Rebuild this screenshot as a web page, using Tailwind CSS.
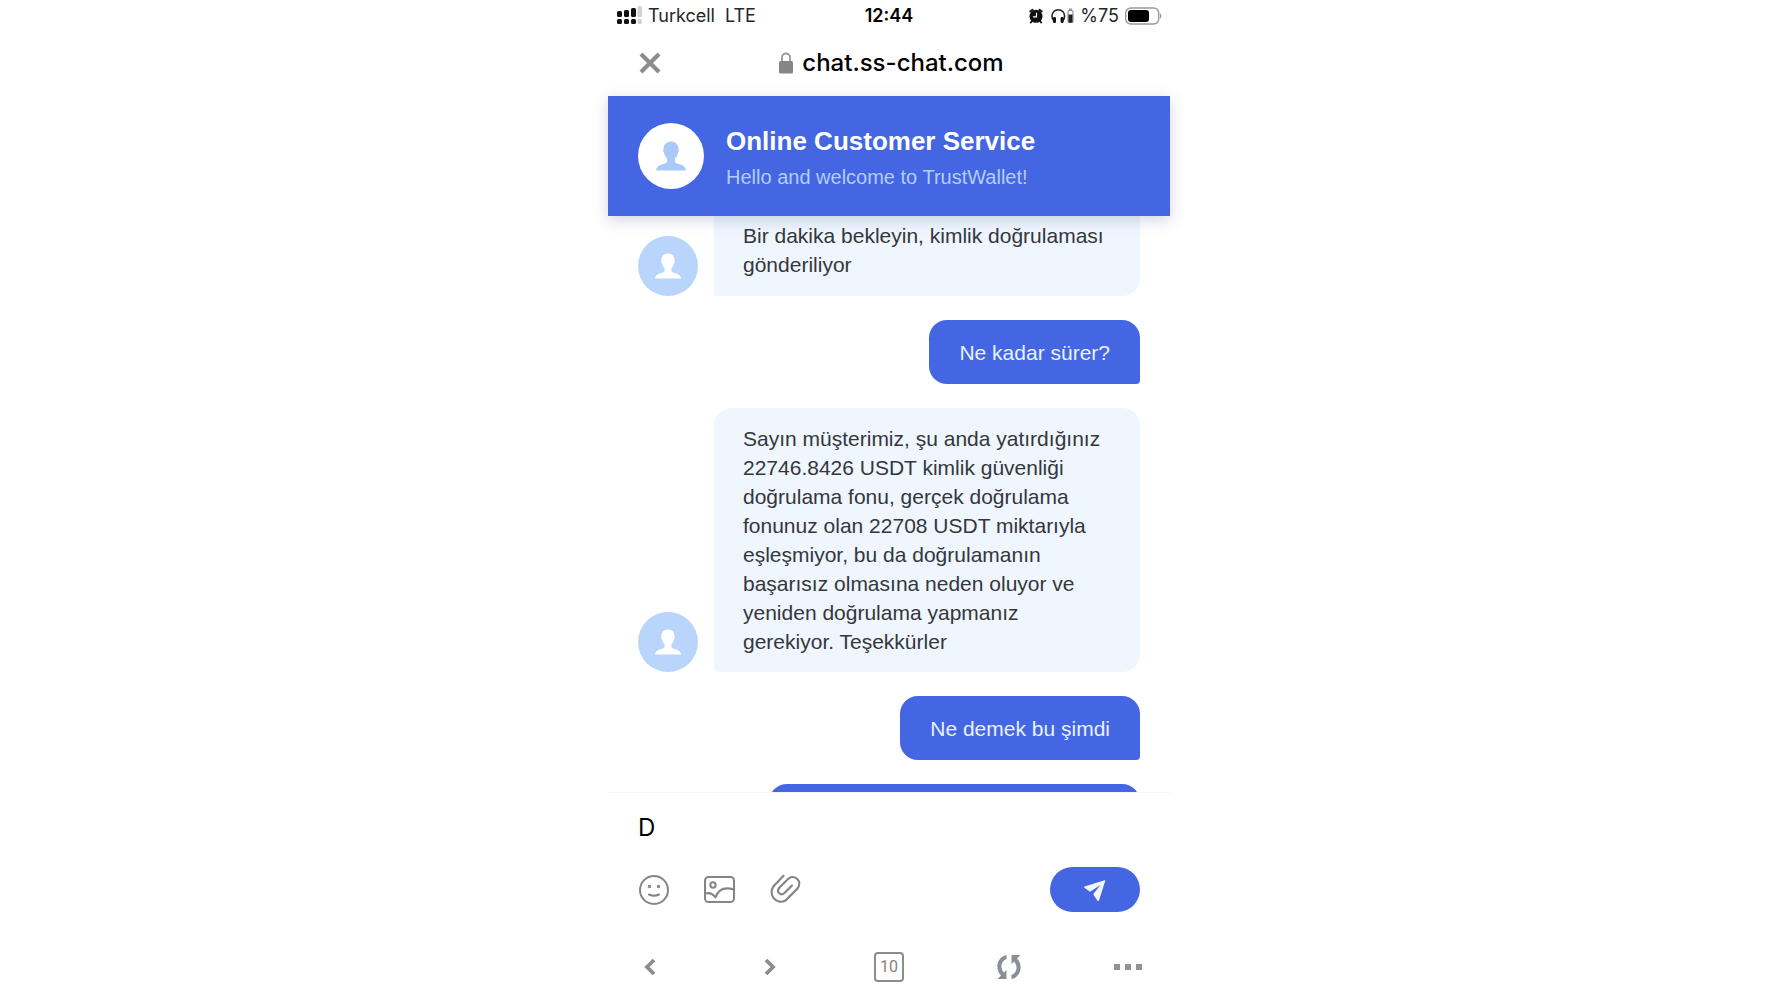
<!DOCTYPE html>
<html lang="tr">
<head>
  <meta charset="UTF-8" />
  <meta name="viewport" content="width=device-width, initial-scale=1.0"/>
  <title>Online Customer Service</title>
  <script src="https://cdn.jsdelivr.net/npm/@tailwindcss/browser@4"></script>
</head>
<body class="bg-white font-['Liberation_Sans',Arial,sans-serif]">

  <!-- shared person shape -->
  <svg class="hidden">
    <symbol id="person" viewBox="0 0 30 30">
      <path d="M15 0.500c4.700 0 7.600 3.200 7.400 7.500 0.700 0.300 0.700 2.500-0.400 3.700-0.500 2.500-1.600 4.400-3 5.600v3.500c0.300 1.200 1.500 1.700 3.500 2.300 4.500 1.200 7 2.700 7.500 6.400H0c0.500-3.700 3-5.200 7.500-6.400 2-0.600 3.200-1.100 3.500-2.300v-3.500c-1.400-1.200-2.500-3.100-3-5.600-1.100-1.200-1.100-3.400-0.400-3.700C7.400 5 8.500 2.500 11 1.700c1-0.800 2.400-1.200 4-1.200z" fill="currentColor"/>
    </symbol>
  </svg>

  <div class="mx-auto flex h-screen w-full max-w-[562px] flex-col">

    <!-- Status bar -->
    <div class="grid h-8 shrink-0 grid-cols-3 items-center px-2 font-[Inter,sans-serif] text-lg leading-8 text-neutral-800">
      <div class="flex items-center gap-1.5">
        <svg class="h-5 w-[26px]" viewBox="0 0 26 20" aria-hidden="true">
          <g fill="#111">
            <rect x="1" y="5" width="5" height="6" rx="1.500"/><rect x="1" y="13" width="5" height="5" rx="1.500"/>
            <rect x="8" y="4" width="5" height="7" rx="1.500"/><rect x="8" y="13" width="5" height="5" rx="1.500"/>
            <rect x="15" y="2" width="5" height="9" rx="1.500"/><rect x="15" y="13" width="5" height="5" rx="1.500"/>
          </g>
          <g fill="#d2d2d2"><rect x="21.500" y="0" width="4.500" height="11" rx="1.500"/><rect x="21.500" y="13" width="4.500" height="5" rx="1.500"/></g>
        </svg>
        <span>Turkcell</span>
        <span class="ml-1">LTE</span>
      </div>
      <div class="text-center font-semibold text-black">12:44</div>
      <div class="flex items-center justify-end gap-1.5">
        <svg class="mr-0.5 h-4 w-[14px]" viewBox="0 0 14 16" aria-hidden="true">
          <path d="M1.300 3.500L3.500 1.800M12.700 3.500L10.500 1.800M3 13l-1.200 1.500M11 13l1.200 1.500" stroke="#111" stroke-width="2" stroke-linecap="round"/>
          <circle cx="7" cy="8.300" r="6.500" fill="#111"/>
          <path d="M7.500 4.800V8.800H4" stroke="#fff" stroke-width="1.200" fill="none"/>
        </svg>
        <svg class="h-4 w-[23px]" viewBox="0 0 23 16" aria-hidden="true">
          <path d="M3 13C1 11 1 9 1 8a6.300 6.300 0 0 1 12.600 0c0 1 0 3-2 5" stroke="#222" stroke-width="1.600" fill="none"/>
          <rect x="2" y="9" width="3" height="6" rx="1.300" fill="#111"/><rect x="9.600" y="9" width="3" height="6" rx="1.300" fill="#111"/>
          <rect x="17" y="2.500" width="5" height="12" rx="1" fill="none" stroke="#777"/>
          <rect x="18" y="0.500" width="3" height="2" fill="#999"/><rect x="17.500" y="6.500" width="4" height="8" fill="#222"/>
        </svg>
        <span>%75</span>
        <svg class="h-[18px] w-[37px]" viewBox="0 0 37 18" aria-hidden="true">
          <rect x="0.750" y="1" width="33" height="16" rx="5" fill="none" stroke="#999" stroke-width="1.400"/>
          <rect x="3" y="3" width="21" height="12" rx="3" fill="#000"/>
          <path d="M35 6.500c1.800 0.500 1.800 4.500 0 5z" fill="#999"/>
        </svg>
      </div>
    </div>

    <!-- Address bar -->
    <div class="grid h-16 shrink-0 grid-cols-[40px_1fr_40px] items-center px-[22px] pb-0.5 font-[Inter,sans-serif]">
      <button type="button" aria-label="Kapat" class="flex size-10 items-center justify-center">
        <svg class="size-6" viewBox="0 0 24 24"><path d="M3 3l18 18M21 3L3 21" stroke="#8b8c90" stroke-width="4.200"/></svg>
      </button>
      <div class="flex items-center justify-center gap-2 pl-1">
        <svg class="h-[22px] w-4" viewBox="0 0 16 22" aria-hidden="true">
          <path d="M4 10V5.500a4 4 0 0 1 8 0V10" fill="none" stroke="#999" stroke-width="1.800"/>
          <rect x="1" y="9" width="14" height="12.500" rx="1.500" fill="#858585"/>
        </svg>
        <span class="text-2xl leading-8 font-medium text-black">chat.ss-chat.com</span>
      </div>
    </div>

    <!-- Chat header -->
    <header class="relative z-10 flex h-[120px] shrink-0 items-center gap-[22px] bg-[#4466e3] px-[30px] shadow-[0_4px_14px_rgba(70,90,140,0.25)]">
      <div class="flex size-[66px] items-center justify-center rounded-full bg-white text-[#a9caf8]">
        <svg class="size-[30px]"><use href="#person"/></svg>
      </div>
      <div class="pt-1.5">
        <h1 class="text-[26px] leading-9 font-bold text-white">Online Customer Service</h1>
        <p class="text-xl leading-9 font-light text-[#b4cdf9]">Hello and welcome to TrustWallet!</p>
      </div>
    </header>

    <!-- Messages -->
    <main class="flex min-h-0 flex-1 flex-col gap-6 overflow-hidden px-[30px] text-[21px] leading-[29px] text-[#35373c]">
      <div class="flex shrink-0 items-end gap-4">
        <div class="flex size-[60px] shrink-0 items-center justify-center rounded-full bg-[#b9d5fb] text-white">
          <svg class="size-[26px]"><use href="#person"/></svg>
        </div>
        <p class="flex-1 rounded-br-[18px] bg-[#eff6fe] px-[29px] pt-[5px] pb-[17px]">Bir dakika bekleyin, kimlik doğrulaması<br>gönderiliyor</p>
      </div>

      <p class="flex h-16 shrink-0 items-center self-end rounded-[18px] rounded-br-[4px] bg-[#4466e3] px-[30px] text-[#e8f1ff]">Ne kadar sürer?</p>

      <div class="flex shrink-0 items-end gap-4">
        <div class="flex size-[60px] shrink-0 items-center justify-center rounded-full bg-[#b9d5fb] text-white">
          <svg class="size-[26px]"><use href="#person"/></svg>
        </div>
        <p class="flex-1 rounded-[18px] rounded-bl-[4px] bg-[#eff6fe] px-[29px] py-4">Sayın müşterimiz, şu anda yatırdığınız<br>22746.8426 USDT kimlik güvenliği<br>doğrulama fonu, gerçek doğrulama<br>fonunuz olan 22708 USDT miktarıyla<br>eşleşmiyor, bu da doğrulamanın<br>başarısız olmasına neden oluyor ve<br>yeniden doğrulama yapmanız<br>gerekiyor. Teşekkürler</p>
      </div>

      <p class="flex h-16 shrink-0 items-center self-end rounded-[18px] rounded-br-[4px] bg-[#4466e3] px-[30px] text-[#e8f1ff]">Ne demek bu şimdi</p>

      <div class="h-16 w-[371px] shrink-0 self-end rounded-[18px] rounded-br-[4px] bg-[#4466e3]"></div>
    </main>

    <!-- Composer -->
    <form class="shrink-0 border-t border-[#f5f5f6] px-[30px] pt-3.5 pb-[22px]">
      <input type="text" value="D" aria-label="Mesaj" class="block h-10 w-full bg-transparent font-[Inter,sans-serif] text-2xl text-black outline-none"/>
      <div class="mt-5 flex h-[45px] items-center gap-[34px]">
        <button type="button" aria-label="Emoji" class="size-8">
          <svg class="size-8" viewBox="0 0 32 32" fill="none" stroke="#858585" stroke-width="2" stroke-linecap="round">
            <circle cx="16" cy="16" r="14"/><path d="M11 20.500c3 1.500 7 1.500 10 0"/>
            <circle cx="11.500" cy="12.500" r="0.700"/><circle cx="20.500" cy="12.500" r="0.700"/>
          </svg>
        </button>
        <button type="button" aria-label="Resim" class="size-8">
          <svg class="size-8" viewBox="0 0 32 32" fill="none" stroke="#858585" stroke-width="2" stroke-linejoin="round">
            <rect x="1" y="3" width="29" height="25" rx="3.500"/><circle cx="9" cy="11" r="2.700"/>
            <path d="M1 19.500c4-1 7.500-0.500 10.500 4C14 16 20 12.500 30 15.500"/>
          </svg>
        </button>
        <button type="button" aria-label="Dosya" class="size-8">
          <svg class="size-8" viewBox="0 0 32 32" fill="none" stroke="#858585" stroke-width="2.200" stroke-linecap="round">
            <path d="M13.500 1.800L3.800 12C-2.500 20 6 31.500 15.500 26.500L27.500 14.500C33 7.500 24.500-0.500 18 5L9.500 13.500C5.500 18.500 11 22 14.500 19L22 11.500"/>
          </svg>
        </button>
        <button type="submit" aria-label="Gönder" class="ml-auto flex h-[45px] w-[90px] items-center justify-center rounded-full bg-[#4466e3]">
          <svg class="size-6" viewBox="0 0 24 24"><path d="M22.500 2L1.500 8.500c-0.500 0.300-0.500 0.800 0 1.200L7 13.800 17.500 7 10.500 15.800v1L14.500 22.800c0.500 0.500 1.200 0.400 1.500-0.200z" fill="#f2f7ff"/></svg>
        </button>
      </div>
    </form>

    <!-- Browser toolbar -->
    <nav class="flex h-[66px] shrink-0 items-center justify-between px-[22px]">
      <button type="button" aria-label="Geri" class="flex size-10 items-center justify-center">
        <svg class="size-5" viewBox="0 0 20 20"><path d="M14 3L7 10l7 7" fill="none" stroke="#8c8c8c" stroke-width="3.800"/></svg>
      </button>
      <button type="button" aria-label="İleri" class="flex size-10 items-center justify-center">
        <svg class="size-5" viewBox="0 0 20 20"><path d="M6 3l7 7-7 7" fill="none" stroke="#8c8c8c" stroke-width="3.800"/></svg>
      </button>
      <button type="button" aria-label="Sekmeler" class="flex size-10 items-center justify-center">
        <span class="flex size-[30px] items-center justify-center rounded-[4px] border-2 border-[#8c8c8c] font-[Roboto,sans-serif] text-base leading-none text-[#858585]">10</span>
      </button>
      <button type="button" aria-label="Yenile" class="flex size-10 items-center justify-center">
        <svg class="h-[26px] w-7" viewBox="0 0 28 26" fill="#8b8e94">
          <path d="M11.500 1v4C5.500 7 5 14.500 9 18.500l2.500-2.500v9H2.500l3.500-3.500C-0.500 14.500 2 3 11.500 1z"/>
          <path d="M16.500 25v-4c6-2 6.500-9.500 2.500-13.500L16.500 10V1h9L22 4.500C28.500 11.500 26 23 16.500 25z"/>
        </svg>
      </button>
      <button type="button" aria-label="Diğer" class="flex size-10 items-center justify-center">
        <svg class="h-2 w-7" viewBox="0 0 28 8" fill="#929292"><path d="M0 1h6v6H0zM11 1h6v6h-6zM22 1h6v6h-6z"/></svg>
      </button>
    </nav>
  </div>

</body>
</html>
